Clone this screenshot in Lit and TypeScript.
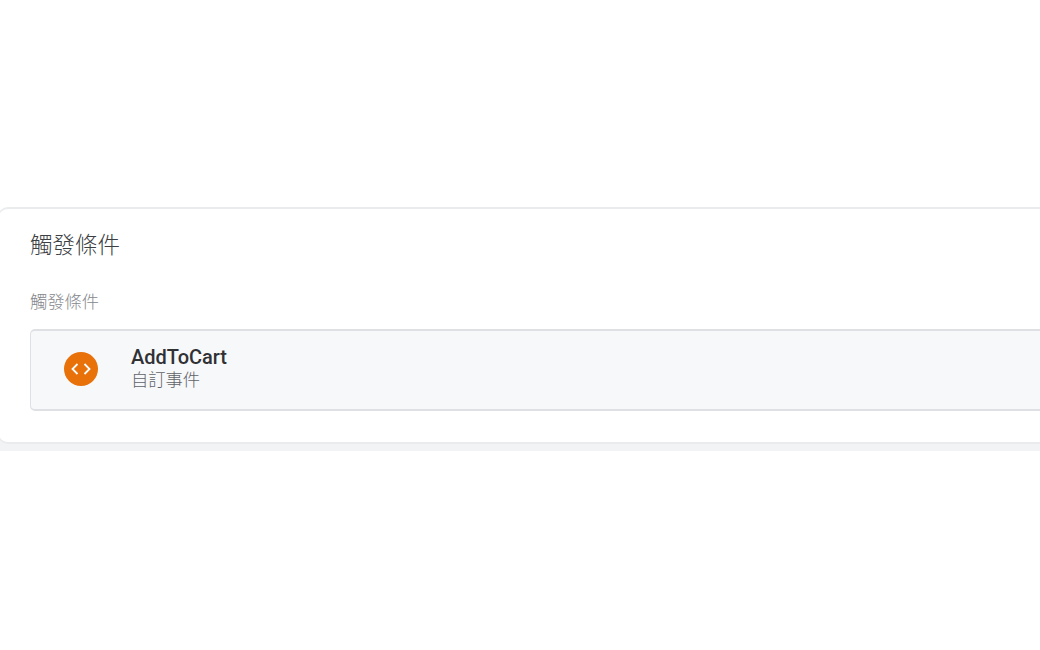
import { LitElement, html, css } from 'lit';
import { customElement } from 'lit/decorators.js';

@customElement('app-root')
export class AppRoot extends LitElement {
  static styles = css`
    :host {
      display: block;
      width: 1040px;
      height: 650px;
      overflow: hidden;
      background: #fff;
      font-family: Roboto, "Noto Sans CJK TC", sans-serif;
      color: #202124;
    }

    .band {
      margin-top: 207px;
      height: 244px;
      background: linear-gradient(#fff 0, #fff 200px, #f1f3f4 200px);
    }

    .card {
      box-sizing: border-box;
      width: 1080px;
      height: 237px;
      margin-left: -2px;
      padding: 20px 0 0 31px;
      background: #fff;
      border: 1px solid #eaebed;
      border-width: 2px 1px 2px 1px;
      border-radius: 10px;
    }

    .title {
      font-size: 22.5px;
      font-weight: 300;
      line-height: 32px;
      color: #3c4043;
    }

    .label {
      margin-top: 31px;
      font-size: 17.3px;
      font-weight: 300;
      line-height: 20px;
      color: #85888c;
    }

    .row {
      box-sizing: border-box;
      display: flex;
      align-items: center;
      width: 1040px;
      height: 82px;
      margin-top: 17px;
      padding: 0 0 2px 33px;
      gap: 33px;
      background: #f7f8fa;
      border: 1px solid #dfe0e4;
      border-width: 2px 1px 2px 1px;
      border-radius: 5px;
    }

    .icon {
      flex: none;
      width: 34px;
      height: 34px;
    }

    .text {
      margin-bottom: 3px;
    }

    .name {
      margin-bottom: 1px;
      font-size: 20px;
      font-weight: 500;
      line-height: 24px;
      color: #303134;
    }

    .kind {
      font-size: 17.3px;
      font-weight: 300;
      line-height: 20px;
      color: #5f6368;
    }
  `;

  render() {
    return html`
      <div class="band">
        <section class="card">
          <div class="title">觸發條件</div>
          <div class="label">觸發條件</div>
          <div class="row">
            <svg class="icon" viewBox="0 0 34 34">
              <circle cx="17" cy="17" r="17" fill="#e8710a"></circle>
              <path d="M13.5 12 8.5 17l5 5M20.5 12l5 5-5 5" fill="none" stroke="#fff" stroke-width="1.8"></path>
            </svg>
            <div class="text">
              <div class="name">AddToCart</div>
              <div class="kind">自訂事件</div>
            </div>
          </div>
        </section>
      </div>
    `;
  }
}
